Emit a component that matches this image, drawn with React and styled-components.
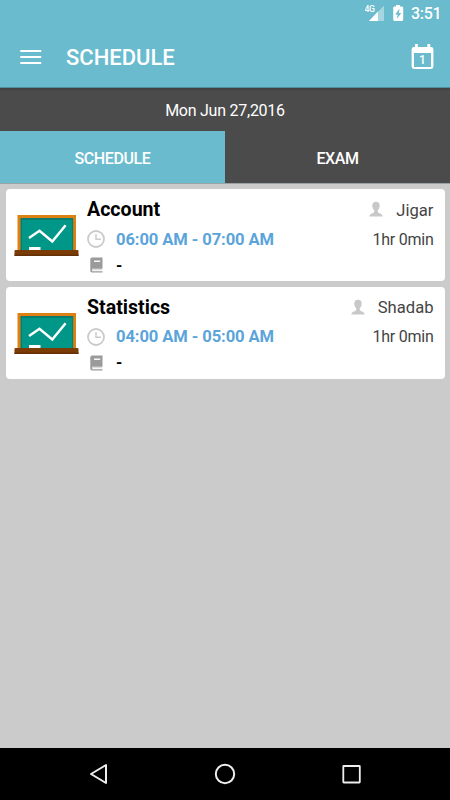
import React from "react";
import styled, { createGlobalStyle } from "styled-components";

const GlobalStyle = createGlobalStyle`
  * {
    box-sizing: border-box;
  }

  body {
    margin: 0;
    font-family: Roboto, sans-serif;
    background: #cbcbcb;
  }

  svg {
    display: block;
    flex: none;
  }
`;

const Screen = styled.div`
  width: 450px;
  height: 800px;
  display: flex;
  flex-direction: column;
  overflow: hidden;
  background: #cbcbcb;
`;

const StatusBar = styled.div`
  height: 28px;
  display: flex;
  align-items: center;
  justify-content: flex-end;
  padding-right: 8px;
  color: #fff;
  background: #69bbcd;
`;

const Clock = styled.span`
  width: 31px;
  margin-left: 4px;
  font-size: 16px;
  font-weight: 500;
  letter-spacing: -0.3px;
  line-height: 28px;
  white-space: nowrap;
`;

const Toolbar = styled.header`
  height: 60px;
  display: flex;
  align-items: center;
  padding: 0 16px 2px 20px;
  color: #fff;
  background: #69bbcd;
  border-bottom: 1px solid #4e8f9d;
`;

const Title = styled.h1`
  flex: 1;
  margin: 2px 0 0 24px;
  font-size: 22px;
  font-weight: 500;
  line-height: 58px;
`;

const DateBar = styled.div`
  height: 43px;
  color: #fff;
  background: linear-gradient(#3f3f3f, #4b4b4b 3px);
  font-size: 16px;
  letter-spacing: -0.25px;
  line-height: 45px;
  text-align: center;
`;

const Tabs = styled.div`
  height: 53px;
  display: flex;
  border-bottom: 1px solid #99a3a5;
  background: #4b4b4b;
`;

const Tab = styled.div`
  flex: 1;
  color: #fff;
  background: ${(props) => (props.$active ? "#69bbcd" : "#4b4b4b")};
  font-size: 16px;
  font-weight: 500;
  letter-spacing: -0.4px;
  line-height: 55px;
  text-align: center;
`;

const List = styled.main`
  flex: 1;
  display: flex;
  flex-direction: column;
  gap: 5.5px;
  padding: 5px 5.5px 0;
`;

const Card = styled.article`
  height: 92px;
  display: flex;
  padding: 6px 11px 0 8px;
  background: #fff;
  border-radius: 4px;
`;

const Details = styled.div`
  flex: 1;
  margin-left: 8.5px;
`;

const Row = styled.div`
  height: ${(props) => props.$height};
  display: flex;
  align-items: center;
`;

const IconSlot = styled.div`
  width: 29px;
  padding-left: ${(props) => props.$inset || "0"};
`;

const Subject = styled.div`
  flex: 1;
  padding-bottom: 1px;
  color: #000;
  font-size: 19.6px;
  font-weight: 700;
`;

const Teacher = styled.div`
  margin-left: 13px;
  color: #444;
  font-size: 16.6px;
`;

const Time = styled.div`
  flex: 1;
  color: #5ba4da;
  font-size: 16.6px;
  font-weight: 700;
  letter-spacing: -0.1px;
`;

const Duration = styled.div`
  color: #444;
  font-size: 16px;
  letter-spacing: -0.25px;
`;

const Note = styled.div`
  color: #000;
  font-size: 16px;
  font-weight: 700;
`;

const NavBar = styled.nav`
  height: 52px;
  display: flex;
  align-items: center;
  justify-content: space-between;
  padding: 0 88px;
  background: #000;
`;

const StatusIcons = () => (
  <svg width="42" height="28" viewBox="0 0 42 28">
    <text x="-.5" y="12" fill="#fff" fontSize="8.6" fontWeight="500" letterSpacing="-.3">
      4G
    </text>
    <path d="M19 5.500V21H4z" fill="#fff" opacity=".4" />
    <path d="M13 11.500V21H4z" fill="#fff" />
    <path d="M31 5h4v1.500h2.200l1 1V20l-1 1h-8l-1-1V7.500l.8-1h2z" fill="#fff" />
    <path d="M34.600 8.500 30.200 14.600H32.700l-1 4.500 4.600-6.200H33.700z" fill="#69bbcd" />
  </svg>
);

const MenuIcon = () => (
  <svg width="22" height="16" viewBox="0 0 22 16">
    <path d="M.3 2h20.900M.3 8h20.900M.3 14h20.900" stroke="#fff" strokeWidth="2" />
  </svg>
);

const CalendarIcon = () => (
  <svg width="23" height="26" viewBox="0 0 23 26">
    <path
      d="M4 0h2.800v3h9.600V0h2.800v3H20q2.400 0 2.400 2.400v17.200Q22.400 25 20 25H3Q.6 25 .6 22.600V5.400Q.6 3 3 3h1zM3 9v14h17V9z"
      fill="#fff"
      fillRule="evenodd"
    />
    <text x="11.4" y="20" fill="#fff" fontSize="12" fontWeight="500" textAnchor="middle">
      1
    </text>
  </svg>
);

const BoardIcon = () => (
  <svg width="65" height="80" viewBox="0 0 65 80">
    <path d="M3.500 20H62V56H3.500z" fill="#df8012" />
    <path d="M6.500 23H59.200V55H6.500z" fill="#087d70" />
    <path d="M8 25H58.200V55H8z" fill="#009788" />
    <path d="m15 43 10.500-7.300L38.300 46.500 51.600 30.300" fill="none" stroke="#fff" strokeWidth="2.5" />
    <path d="M15 52h11.500v3H15z" fill="#fff" />
    <path d="M.5 56q0-1 1-1h62q1 0 1 1v5H.5z" fill="#7b3b05" />
    <path d="M.5 59.500h64V61H.5z" fill="#663006" />
  </svg>
);

const ClockIcon = () => (
  <svg width="18" height="18" viewBox="0 0 18 18" fill="none" stroke="#cbcbcb">
    <circle cx="9" cy="9" r="8" strokeWidth="1.8" />
    <path d="M9 4v5.300h5" strokeWidth="1.5" />
  </svg>
);

const BookIcon = () => (
  <svg width="13" height="16" viewBox="0 0 13 16">
    <path d="M2 .5h10.500v11.200H2.200v2.600h10.300v1.200H2Q.3 15.500.3 13.500V2.200Q.3.5 2 .5z" fill="#9a9a9a" />
    <path d="M4 3.500h6.200v1.400H4z" fill="#fff" />
    <path d="M2 12.700h10" stroke="#d4d4d4" />
  </svg>
);

const PersonIcon = () => (
  <svg width="14" height="18" viewBox="0 0 14 18">
    <path
      d="M7 .8c2.500 0 3.700 1.500 3.700 3.700 0 2-.8 3.700-1.900 4.700v1.600c0 1.600 4.800 1.700 4.900 4.800H.3c.1-3.100 4.900-3.200 4.900-4.800V9.200c-1.100-1-1.900-2.700-1.900-4.700C3.300 2.300 4.500.8 7 .8z"
      fill="#c8c8c8"
    />
  </svg>
);

const BackIcon = () => (
  <svg width="22" height="22" viewBox="0 0 22 22">
    <path d="M18 2v18L3 11z" fill="none" stroke="#eee" strokeWidth="2" strokeLinejoin="round" />
  </svg>
);

const HomeIcon = () => (
  <svg width="22" height="22" viewBox="0 0 22 22">
    <circle cx="11" cy="11" r="9.2" fill="none" stroke="#eee" strokeWidth="2" />
  </svg>
);

const RecentIcon = () => (
  <svg width="22" height="22" viewBox="0 0 22 22">
    <rect x="3.3" y="3" width="16.5" height="16.5" rx=".5" fill="none" stroke="#eee" strokeWidth="1.8" />
  </svg>
);

const lectures = [
  { subject: "Account", teacher: "Jigar", time: "06:00 AM - 07:00 AM", duration: "1hr 0min", note: "-" },
  { subject: "Statistics", teacher: "Shadab", time: "04:00 AM - 05:00 AM", duration: "1hr 0min", note: "-" },
];

const LectureCard = ({ lecture }) => (
  <Card>
    <BoardIcon />
    <Details>
      <Row $height="30px">
        <Subject>{lecture.subject}</Subject>
        <PersonIcon />
        <Teacher>{lecture.teacher}</Teacher>
      </Row>
      <Row $height="28px">
        <IconSlot>
          <ClockIcon />
        </IconSlot>
        <Time>{lecture.time}</Time>
        <Duration>{lecture.duration}</Duration>
      </Row>
      <Row $height="24px">
        <IconSlot $inset="2.5px">
          <BookIcon />
        </IconSlot>
        <Note>{lecture.note}</Note>
      </Row>
    </Details>
  </Card>
);

const App = () => (
  <>
    <GlobalStyle />
    <Screen>
      <StatusBar>
        <StatusIcons />
        <Clock>3:51</Clock>
      </StatusBar>
      <Toolbar>
        <MenuIcon />
        <Title>SCHEDULE</Title>
        <CalendarIcon />
      </Toolbar>
      <DateBar>Mon Jun 27,2016</DateBar>
      <Tabs>
        <Tab $active>SCHEDULE</Tab>
        <Tab>EXAM</Tab>
      </Tabs>
      <List>
        {lectures.map((lecture) => (
          <LectureCard key={lecture.subject} lecture={lecture} />
        ))}
      </List>
      <NavBar>
        <BackIcon />
        <HomeIcon />
        <RecentIcon />
      </NavBar>
    </Screen>
  </>
);

export default App;
